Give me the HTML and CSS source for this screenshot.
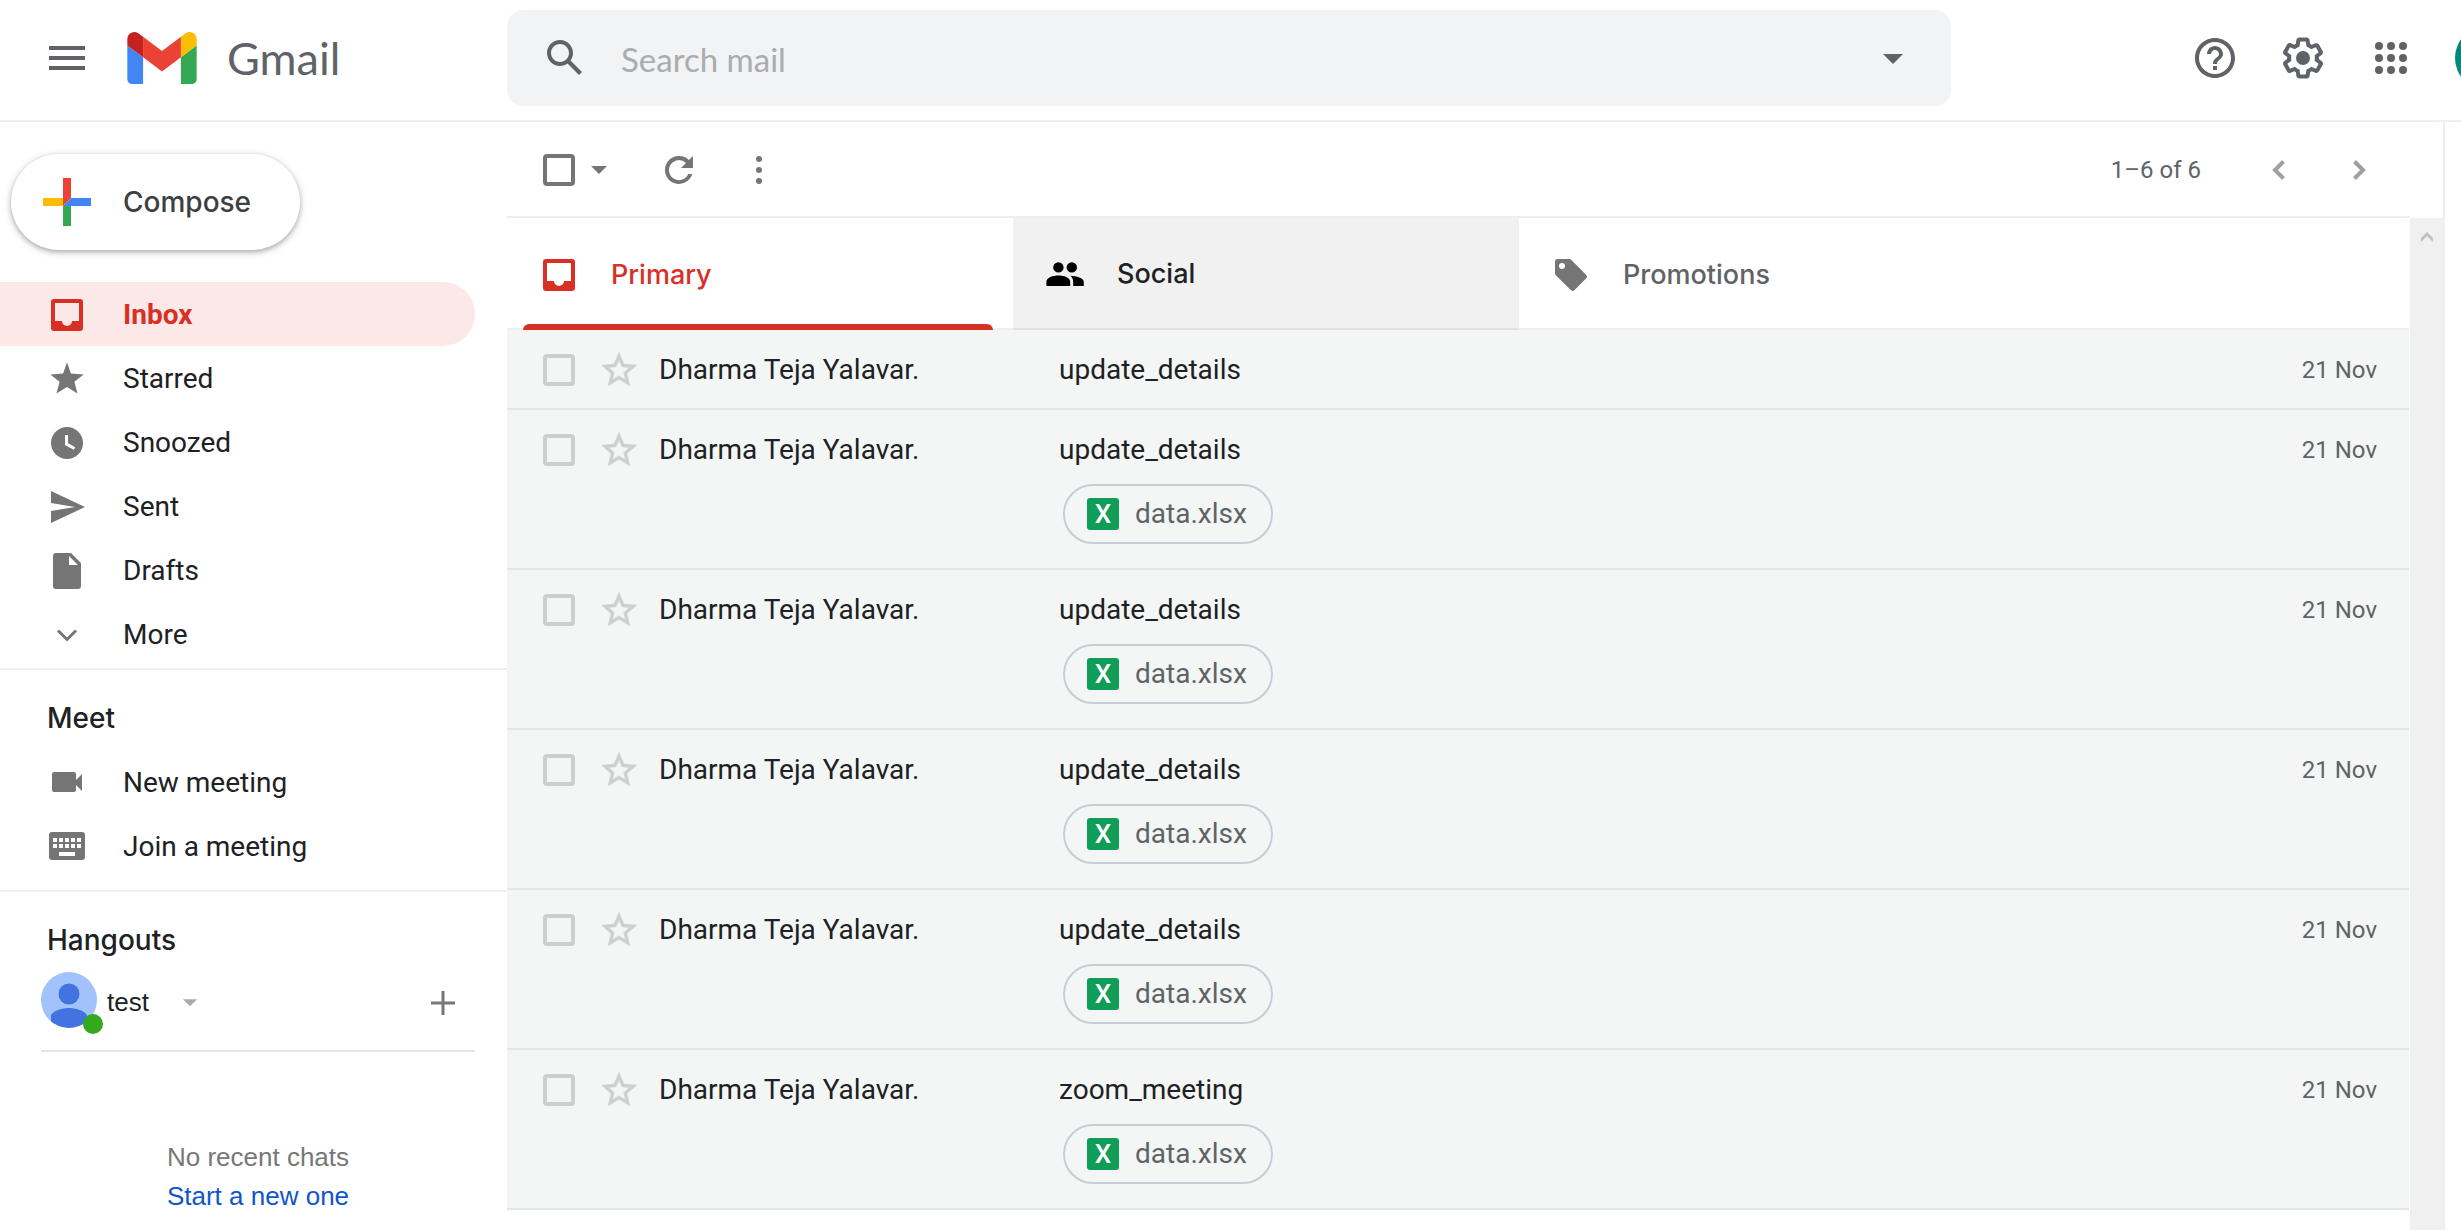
FILE: index.html
```html
<!DOCTYPE html>
<html lang="en">
<head>
<meta charset="utf-8">
<title>Gmail</title>
<link rel="stylesheet" href="styles.css">
</head>
<body>
<svg class="sprite" aria-hidden="true">
  <symbol id="i-inbox" viewBox="0 0 24 24"><path fill-rule="evenodd" d="M5.5 4h13A1.5 1.5 0 0 1 20 5.5v13a1.5 1.5 0 0 1-1.5 1.5h-13A1.5 1.5 0 0 1 4 18.5v-13A1.5 1.5 0 0 1 5.500 4zM6 6v9h3.500a2.500 2.500 0 0 0 5 0H18V6z"/></symbol>
  <symbol id="i-star" viewBox="0 0 48 48"><path d="M24 7.3l3.9 11.1 12.8 1-9.3 7.4 3.1 11.8L24 32l-10.5 6.6 3.1-11.8-9.3-7.4 12.8-1z"/></symbol>
  <symbol id="i-star-line" viewBox="0 0 24 24"><path stroke="currentColor" stroke-width=".3" d="M22 9.24l-7.19-.62L12 2 9.19 8.63 2 9.24l5.46 4.73L5.82 21 12 17.27 18.18 21l-1.63-7.03L22 9.24zM12 15.4l-3.76 2.27 1-4.28-3.32-2.88 4.38-.38L12 6.1l1.71 4.04 4.38.38-3.32 2.88 1 4.28L12 15.4z"/></symbol>
  <symbol id="i-caret" viewBox="0 0 24 24"><path d="M7 10l5 5 5-5z"/></symbol>
</svg>

<header class="header">
  <div class="brand">
    <button class="icon-btn" aria-label="Main menu"><svg viewBox="0 0 24 24"><path d="M3 18h18v-2H3v2zm0-5h18v-2H3v2zm0-7v2h18V6H3z"/></svg></button>
    <a class="logo" href="#"><svg viewBox="52 42 88 66" aria-hidden="true">
      <path fill="#4285f4" d="M58 108h14V74L52 59v43c0 3.32 2.69 6 6 6"/>
      <path fill="#34a853" d="M120 108h14c3.32 0 6-2.69 6-6V59l-20 15"/>
      <path fill="#fbbc04" d="M120 48v26l20-15v-8c0-7.42-8.47-11.65-14.4-7.2"/>
      <path fill="#ea4335" d="M72 74V48l24 18 24-18v26L96 92"/>
      <path fill="#c5221f" d="M52 51v8l20 15V48l-5.6-4.2c-5.94-4.45-14.4-.22-14.4 7.2"/>
    </svg><span>Gmail</span></a>
  </div>
  <form class="search">
    <button class="icon-btn" type="button" aria-label="Search"><svg viewBox="0 0 24 24"><path d="M20.49 19l-5.73-5.73C15.53 12.2 16 10.91 16 9.5 16 5.91 13.09 3 9.5 3S3 5.91 3 9.5 5.91 16 9.5 16c1.41 0 2.7-.47 3.77-1.24L19 20.49 20.49 19zM5 9.5C5 7.01 7.01 5 9.5 5S14 7.01 14 9.5 11.99 14 9.5 14 5 11.99 5 9.5z"/></svg></button>
    <input class="search-input" type="text" placeholder="Search mail" aria-label="Search mail">
    <button class="icon-btn" type="button" aria-label="Search options"><svg><use href="#i-caret"/></svg></button>
  </form>
  <div class="tools">
    <button class="icon-btn" aria-label="Support"><svg viewBox="0 0 24 24"><path d="M11 18h2v-2h-2v2zm1-16C6.48 2 2 6.48 2 12s4.48 10 10 10 10-4.48 10-10S17.52 2 12 2zm0 18c-4.41 0-8-3.59-8-8s3.59-8 8-8 8 3.59 8 8-3.59 8-8 8zm0-14c-2.21 0-4 1.79-4 4h2c0-1.1.9-2 2-2s2 .9 2 2c0 2-3 1.75-3 5h2c0-2.25 3-2.5 3-5 0-2.21-1.79-4-4-4z"/></svg></button>
    <button class="icon-btn" aria-label="Settings"><svg viewBox="0 0 24 24"><path d="M13.85 22.25h-3.7c-.74 0-1.36-.54-1.45-1.27l-.27-1.89c-.27-.14-.53-.29-.79-.46l-1.8.72c-.7.26-1.47-.03-1.81-.65L2.2 15.53c-.35-.66-.2-1.44.36-1.88l1.53-1.19c-.01-.15-.02-.3-.02-.46 0-.15.01-.31.02-.46l-1.52-1.19c-.59-.45-.74-1.26-.37-1.88l1.85-3.19c.34-.62 1.11-.9 1.79-.63l1.81.73c.26-.17.52-.32.78-.46l.27-1.91c.09-.7.71-1.25 1.44-1.25h3.7c.74 0 1.36.54 1.45 1.27l.27 1.89c.27.14.53.29.79.46l1.8-.72c.71-.26 1.48.03 1.82.65l1.84 3.18c.36.66.2 1.44-.36 1.88l-1.52 1.19c.01.15.02.3.02.46s-.01.31-.02.46l1.52 1.19c.56.45.72 1.23.37 1.86l-1.86 3.22c-.34.62-1.11.9-1.8.63l-1.8-.72c-.26.17-.52.32-.78.46l-.27 1.91c-.1.68-.72 1.22-1.46 1.22zm-3.23-2h2.76l.37-2.55.53-.22c.44-.18.88-.44 1.34-.78l.45-.34 2.38.96 1.38-2.4-2.03-1.58.07-.56c.03-.26.06-.51.06-.78s-.03-.53-.06-.78l-.07-.56 2.03-1.58-1.39-2.4-2.39.96-.45-.35c-.42-.32-.87-.58-1.33-.77l-.52-.22-.37-2.55h-2.76l-.37 2.55-.53.21c-.44.19-.88.44-1.34.79l-.45.33-2.38-.95-1.39 2.39 2.03 1.58-.07.56a7 7 0 0 0-.06.79c0 .26.02.53.06.78l.07.56-2.03 1.58 1.38 2.4 2.39-.96.45.35c.43.33.86.58 1.33.77l.53.22.38 2.55z"/><circle cx="12" cy="12" r="3.5"/></svg></button>
    <button class="icon-btn" aria-label="Google apps"><svg viewBox="0 0 24 24"><circle cx="6" cy="6" r="2"/><circle cx="12" cy="6" r="2"/><circle cx="18" cy="6" r="2"/><circle cx="6" cy="12" r="2"/><circle cx="12" cy="12" r="2"/><circle cx="18" cy="12" r="2"/><circle cx="6" cy="18" r="2"/><circle cx="12" cy="18" r="2"/><circle cx="18" cy="18" r="2"/></svg></button>
    <button class="account" aria-label="Account"></button>
  </div>
</header>

<div class="body">
  <aside class="sidebar">
    <button class="compose"><svg viewBox="0 0 48 48" aria-hidden="true"><path fill="#ea4335" d="M20 0h8v20l-8 8z"/><path fill="#fbbc04" d="M0 20h20v8H0z"/><path fill="#34a853" d="M20 28h8v20h-8z"/><path fill="#4285f4" d="M28 20h20v8H20z"/></svg>Compose</button>

    <nav class="nav">
      <a class="nav-item active" href="#"><svg><use href="#i-inbox"/></svg>Inbox</a>
      <a class="nav-item" href="#"><svg><use href="#i-star"/></svg>Starred</a>
      <a class="nav-item" href="#"><svg viewBox="0 0 48 48"><circle cx="24" cy="24" r="16"/><path d="M23.500 16v9l8 4.500" fill="none" stroke="#fff" stroke-width="3"/></svg>Snoozed</a>
      <a class="nav-item" href="#"><svg viewBox="0 0 48 48"><path d="M8 8l34 16L8 40V28l24-4-24-4z"/></svg>Sent</a>
      <a class="nav-item" href="#"><svg viewBox="0 0 48 48"><path fill-rule="evenodd" d="M13 6h15l10 10v23a3 3 0 0 1-3 3H13a3 3 0 0 1-3-3V9a3 3 0 0 1 3-3zM26 9v9h9z"/></svg>Drafts</a>
      <a class="nav-item" href="#"><svg viewBox="0 0 48 48"><path d="M15 19.500l9 9 9-9" fill="none" stroke="currentColor" stroke-width="3"/></svg>More</a>
    </nav>

    <section class="section">
      <h2 class="section-title">Meet</h2>
      <a class="nav-item" href="#"><svg viewBox="0 0 48 48"><path d="M11 13h20a2 2 0 0 1 2 2v6l6-6v17l-6-6v5a2 2 0 0 1-2 2H11a2 2 0 0 1-2-2V15a2 2 0 0 1 2-2z"/></svg>New meeting</a>
      <a class="nav-item" href="#"><svg viewBox="0 0 48 48"><path fill-rule="evenodd" d="M9 9h30a3 3 0 0 1 3 3v22a3 3 0 0 1-3 3H9a3 3 0 0 1-3-3V12a3 3 0 0 1 3-3zM10 15v4h4v-4zM16 15v4h4v-4zM22 15v4h4v-4zM28 15v4h4v-4zM34 15v4h4v-4zM10 21v4h4v-4zM16 21v4h4v-4zM22 21v4h4v-4zM28 21v4h4v-4zM34 21v4h4v-4zM16 29v4h16v-4z"/></svg>Join a meeting</a>
    </section>

    <section class="section hangouts">
      <h2 class="section-title">Hangouts</h2>
      <div class="roster">
        <span class="face">
          <svg viewBox="0 0 56 56" aria-hidden="true"><clipPath id="face"><circle cx="28" cy="28" r="28"/></clipPath><g clip-path="url(#face)"><path fill="#a1c2fa" d="M0 0h56v56H0z"/><circle cx="28" cy="22" r="10.500" fill="#4273e0"/><path fill="#4273e0" d="M10 56V43c4-5 11-7 18-7s14 2 18 7v13z"/></g></svg>
          <span class="presence"></span>
        </span>
        <button class="user">test<svg><use href="#i-caret"/></svg></button>
        <button class="new-chat" aria-label="New conversation"><svg viewBox="0 0 24 24"><path d="M0 10.500h10.500V0h3v10.500H24v3H13.500V24h-3V13.500H0z"/></svg></button>
      </div>
      <p class="empty">No recent chats<br><a href="#">Start a new one</a></p>
    </section>
  </aside>

  <main class="main">
    <div class="toolbar">
      <input class="check" type="checkbox" aria-label="Select all">
      <button class="icon-btn select-more" aria-label="Select options"><svg viewBox="0 0 48 48"><path d="M16 20h16l-8 8z"/></svg></button>
      <button class="icon-btn refresh" aria-label="Refresh"><svg viewBox="0 0 48 48"><path d="M33.900 14.100A14 14 0 1 0 37.300 28h-4.100A10 10 0 1 1 31 17l-5 5h12V10z"/></svg></button>
      <button class="icon-btn more" aria-label="More"><svg viewBox="0 0 48 48"><circle cx="24" cy="13" r="3"/><circle cx="24" cy="24" r="3"/><circle cx="24" cy="35" r="3"/></svg></button>
      <span class="count">1–6 of 6</span>
      <button class="icon-btn page" aria-label="Newer"><svg viewBox="0 0 48 48"><path d="M28.500 15.500L20 24l8.500 8.500" fill="none" stroke="currentColor" stroke-width="4"/></svg></button>
      <button class="icon-btn page" aria-label="Older"><svg viewBox="0 0 48 48"><path d="M19.500 15.500L28 24l-8.500 8.500" fill="none" stroke="currentColor" stroke-width="4"/></svg></button>
    </div>

    <div class="content">
      <div class="tabs" role="tablist">
        <button class="tab selected" role="tab" aria-selected="true"><svg><use href="#i-inbox"/></svg>Primary</button>
        <button class="tab hover" role="tab"><svg viewBox="0 0 24 24"><circle cx="8.700" cy="8.700" r="2.600"/><circle cx="15.400" cy="8.700" r="2.600"/><path d="M2.700 18v-2c0-2.200 3.300-3.200 6-3.200s5.900 1 5.900 3.200v2zM14.700 12.900c3 .1 6.700 1 6.700 3.200v1.900h-5.300v-1.900c0-1.400-.5-2.400-1.400-3.200z"/></svg>Social</button>
        <button class="tab" role="tab"><svg viewBox="0 0 24 24"><path fill-rule="evenodd" d="M19.500 11.900l-7.300-7.400c-.3-.3-.6-.5-1-.5H5.300C4.600 4 4 4.600 4 5.300v5.800c0 .4.200.7.400 1l7.500 7.400c.6.600 1.300.6 1.900 0l5.700-5.700c.7-.6.700-1.300 0-1.900zM7.500 9a1.500 1.500 0 1 1 0-3 1.500 1.500 0 0 1 0 3z"/></svg>Promotions</button>
      </div>

      <table class="mails">
        <colgroup><col class="c-check"><col class="c-star"><col class="c-from"><col><col class="c-date"></colgroup>
        <tbody>
        <tr>
          <td class="pick"><input class="check" type="checkbox" aria-label="Select"></td>
          <td class="pick"><button class="star" aria-label="Star"><svg><use href="#i-star-line"/></svg></button></td>
          <td>Dharma Teja Yalavar.</td>
          <td>update_details</td>
          <td class="date">21 Nov</td>
        </tr>
        <tr>
          <td class="pick"><input class="check" type="checkbox" aria-label="Select"></td>
          <td class="pick"><button class="star" aria-label="Star"><svg><use href="#i-star-line"/></svg></button></td>
          <td>Dharma Teja Yalavar.</td>
          <td>update_details<a class="chip" href="#"><span class="xls">X</span>data.xlsx</a></td>
          <td class="date">21 Nov</td>
        </tr>
        <tr>
          <td class="pick"><input class="check" type="checkbox" aria-label="Select"></td>
          <td class="pick"><button class="star" aria-label="Star"><svg><use href="#i-star-line"/></svg></button></td>
          <td>Dharma Teja Yalavar.</td>
          <td>update_details<a class="chip" href="#"><span class="xls">X</span>data.xlsx</a></td>
          <td class="date">21 Nov</td>
        </tr>
        <tr>
          <td class="pick"><input class="check" type="checkbox" aria-label="Select"></td>
          <td class="pick"><button class="star" aria-label="Star"><svg><use href="#i-star-line"/></svg></button></td>
          <td>Dharma Teja Yalavar.</td>
          <td>update_details<a class="chip" href="#"><span class="xls">X</span>data.xlsx</a></td>
          <td class="date">21 Nov</td>
        </tr>
        <tr>
          <td class="pick"><input class="check" type="checkbox" aria-label="Select"></td>
          <td class="pick"><button class="star" aria-label="Star"><svg><use href="#i-star-line"/></svg></button></td>
          <td>Dharma Teja Yalavar.</td>
          <td>update_details<a class="chip" href="#"><span class="xls">X</span>data.xlsx</a></td>
          <td class="date">21 Nov</td>
        </tr>
        <tr>
          <td class="pick"><input class="check" type="checkbox" aria-label="Select"></td>
          <td class="pick"><button class="star" aria-label="Star"><svg><use href="#i-star-line"/></svg></button></td>
          <td>Dharma Teja Yalavar.</td>
          <td>zoom_meeting<a class="chip" href="#"><span class="xls">X</span>data.xlsx</a></td>
          <td class="date">21 Nov</td>
        </tr>
        </tbody>
      </table>
    </div>
    <div class="scrollbar" aria-hidden="true"><svg viewBox="0 0 12 10"><path d="M0 10V6l6-6 6 6v4L6 4z"/></svg></div>
  </main>
  <div class="side-panel"></div>
</div>
</body>
</html>
```

FILE: styles.css
```css
* { box-sizing: border-box; }

body {
  margin: 0;
  min-height: 100vh;
  display: flex;
  flex-direction: column;
  overflow: hidden;
  background: #fff;
  color: #202124;
  font: 28px/32px Roboto, Arial, sans-serif;
}

button {
  border: 0;
  padding: 0;
  background: none;
  color: inherit;
  font: inherit;
}

a { color: inherit; text-decoration: none; }
svg { display: block; fill: currentColor; }
.sprite { display: none; }

.icon-btn { flex: none; width: 48px; height: 48px; color: #5f6368; }
.icon-btn svg { width: 48px; height: 48px; }

/* Header */
.header {
  display: flex;
  align-items: center;
  padding: 10px 0 14px;
  border-bottom: 2px solid #eceff1;
  overflow: hidden;
}
.brand {
  flex: none;
  display: flex;
  align-items: center;
  gap: 36px;
  width: 507px;
  padding-left: 43px;
}
.logo {
  display: flex;
  align-items: center;
  gap: 30px;
  color: #5f6368;
  font-family: Lato, sans-serif;
  font-size: 45px;
  line-height: 48px;
}
.logo svg { width: 70px; height: 52px; }
.search {
  flex: 0 1 1444px;
  display: flex;
  align-items: center;
  gap: 32px;
  height: 96px;
  padding: 0 34px;
  border-radius: 16px;
  background: #f1f3f4;
}
.search-input {
  flex: 1;
  min-width: 0;
  padding: 2px 0 0;
  border: 0;
  outline: 0;
  background: none;
  font: 33px/40px Lato, sans-serif;
}
.search-input::placeholder { color: #aaacae; }
.tools {
  flex: none;
  display: flex;
  align-items: center;
  gap: 40px;
  margin-left: auto;
  margin-right: -58px;
}
.account {
  width: 64px;
  height: 64px;
  border-radius: 50%;
  background: #00897b;
}

.body {
  flex: 1;
  display: grid;
  grid-template-columns: 507px minmax(0, 1fr) 18px;
}
.side-panel { border-left: 2px solid #eceff1; }

/* Sidebar */
.sidebar { padding-top: 32px; }
.compose {
  display: flex;
  align-items: center;
  gap: 32px;
  height: 96px;
  margin: 0 0 32px 11px;
  padding: 0 49px 0 32px;
  border-radius: 48px;
  background: #fff;
  box-shadow: 0 2px 4px rgba(60, 64, 67, .3), 0 2px 6px 2px rgba(60, 64, 67, .15);
  color: #3c4043;
  font-family: Inter, sans-serif;
  font-weight: 500;
}
.compose svg { width: 48px; height: 48px; }
.nav { padding-bottom: 2px; }
.nav-item {
  display: flex;
  align-items: center;
  gap: 32px;
  height: 64px;
  margin-right: 32px;
  padding: 2px 0 0 43px;
  border-radius: 0 32px 32px 0;
}
.nav-item svg { width: 48px; height: 48px; color: #757575; }
.nav-item.active { background: #fce8e6; color: #d93025; font-weight: 700; }
.nav-item.active svg { color: #d93025; }
.section { padding: 32px 0 12px; border-top: 2px solid #eceff1; }
.section-title {
  margin: 0 0 16px 47px;
  font: 500 28px/32px Inter, sans-serif;
}
.hangouts { font-family: "Liberation Sans", Arial, sans-serif; font-size: 26px; }
.roster {
  display: flex;
  align-items: center;
  margin: 0 32px 0 41px;
  padding-bottom: 22px;
  border-bottom: 2px solid #e5e5e5;
}
.face { position: relative; width: 56px; height: 56px; }
.presence {
  position: absolute;
  right: -6px;
  bottom: -6px;
  width: 20px;
  height: 20px;
  border-radius: 50%;
  background: #34a91d;
}
.user { display: flex; align-items: center; gap: 24px; margin-left: 10px; padding-top: 4px; }
.user svg { width: 34px; height: 34px; color: #aaa; }
.new-chat { margin-left: auto; margin-right: 20px; padding-top: 6px; color: #777; }
.new-chat svg { width: 24px; height: 24px; }
.empty { margin: 86px 32px 0 41px; text-align: center; color: #777; line-height: 39px; }
.empty a { color: #15c; }

/* Message area */
.main {
  display: grid;
  grid-template-columns: minmax(0, 1fr) 33px;
  grid-template-rows: auto 1fr;
}
.toolbar {
  display: flex;
  align-items: center;
  height: 96px;
  padding: 2px 27px 0 36px;
  border-bottom: 2px solid #eceff1;
}
.toolbar .icon-btn { color: #757575; }
.toolbar .icon-btn.page { color: #a0a0a0; }
.refresh { margin-left: 32px; }
.more { margin-left: 32px; }
.count { margin-left: auto; margin-right: 54px; color: #5f6368; font-size: 24px; }
.page + .page { margin-left: 32px; }
.check {
  appearance: none;
  display: block;
  flex: none;
  width: 32px;
  height: 32px;
  margin: 0;
  border: 4px solid #757575;
  border-radius: 4px;
}
.content { grid-column: 1; grid-row: 2; margin-right: 1px; }

.tabs { display: flex; height: 112px; border-bottom: 2px solid #eceff1; }
.tab {
  flex: 0 1 506px;
  display: flex;
  align-items: center;
  gap: 28px;
  height: 112px;
  padding: 2px 28px 0;
  color: #5f6368;
  font-family: Inter, sans-serif;
  font-size: 27px;
  font-weight: 500;
}
.tab svg { width: 48px; height: 48px; color: #757575; }
.tab.selected, .tab.selected svg { color: #d93025; }
.tab.selected { position: relative; }
.tab.selected::after {
  content: "";
  position: absolute;
  left: 16px;
  right: 20px;
  bottom: 0;
  height: 6px;
  border-radius: 6px 6px 0 0;
  background: #d93025;
}
.tab.hover { border-bottom: 2px solid #dfe1e5; background: #f1f1f1; color: #202124; }
.tab.hover svg { color: #000; }

.mails { width: 100%; border-spacing: 0; table-layout: fixed; background: #f4f6f6; }
.mails td { height: 80px; padding: 24px 0 22px; border-bottom: 2px solid #e1e7ea; vertical-align: top; }
.c-check { width: 88px; }
.c-star { width: 64px; }
.c-from { width: 400px; }
.c-date { width: 180px; }
.mails .check { margin-left: 36px; border-color: #cdcfcf; }
.star { display: flex; align-items: center; height: 32px; color: #cdcfcf; }
.star svg { width: 48px; height: 42px; }
.mails .date { padding-right: 32px; text-align: right; color: #5f6368; font-size: 24px; }
.chip {
  display: flex;
  align-items: center;
  gap: 16px;
  width: max-content;
  height: 60px;
  margin: 18px 0 2px 4px;
  padding: 0 24px 0 22px;
  border: 2px solid #c6cdd6;
  border-radius: 30px;
  color: #5f6368;
}
.xls {
  width: 32px;
  border-radius: 3px;
  background: #0f9d58;
  color: #fff;
  font-size: 26px;
  font-weight: 500;
  text-align: center;
}

/* Scroll track */
.scrollbar { grid-column: 2; grid-row: 2; padding: 14px 11px; background: #f0f0f0; color: #bfbfbf; }
.scrollbar svg { width: 12px; height: 10px; }
```
